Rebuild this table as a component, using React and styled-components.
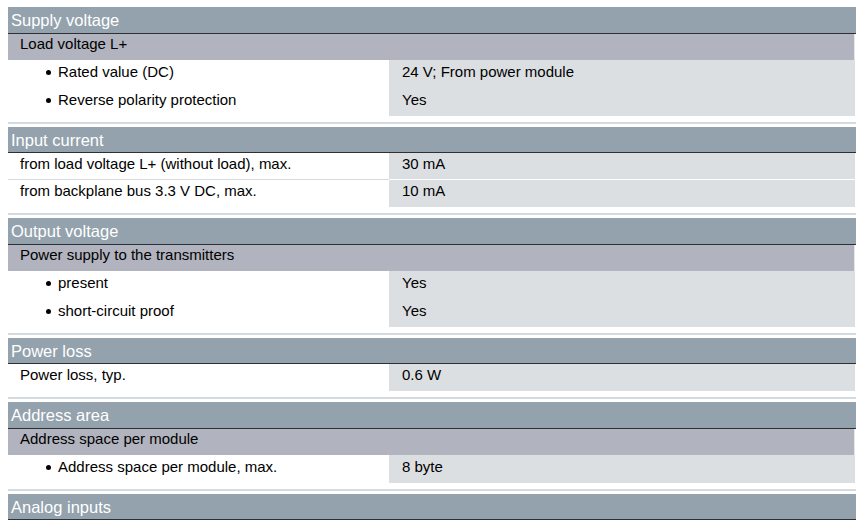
import React from 'react';
import styled, { createGlobalStyle } from 'styled-components';

const GlobalStyle = createGlobalStyle`
  body {
    margin: 0;
    background: #fff;
    font-family: "Liberation Sans", Arial, sans-serif;
    color: #000;
  }
`;

const Page = styled.div`
  padding: 7px 10px 0 8px;
`;

const Table = styled.div`
  width: 848px;
  display: flex;
  flex-direction: column;
`;

const Section = styled.section`
  display: flex;
  flex-direction: column;
  margin-top: ${({ first }) => (first ? '0' : '6px')};
  padding-top: ${({ first }) => (first ? '0' : '3px')};
  border-top: ${({ first }) => (first ? 'none' : '2px solid #d5dadf')};
`;

const Header = styled.div`
  height: 25.5px;
  line-height: 27px;
  padding-left: 3px;
  background: #93a2ad;
  border-bottom: 1px solid #2e3134;
  color: #fff;
  font-size: 16.5px;
  overflow: hidden;
`;

const SubHeader = styled.div`
  height: 26px;
  box-sizing: border-box;
  line-height: 20px;
  padding-left: 12px;
  width: 847px;
  background: #b1b4be;
  border-right: 1px solid #e4e6e9;
  font-size: 15px;
`;

const Row = styled.div`
  display: grid;
  grid-template-columns: 381px 466px;
  height: ${({ bullet }) => (bullet ? '28px' : '27px')};
  font-size: 15px;
  line-height: 17px;
`;

const Label = styled.div`
  box-sizing: border-box;
  padding: ${({ bullet }) => (bullet ? '3px 0 0 38px' : '2px 0 0 12px')};
  border-bottom: ${({ sep }) => (sep ? '1px solid #d7dbdf' : 'none')};
  display: flex;
  align-items: flex-start;
`;

const Dot = styled.span`
  width: 5px;
  height: 5px;
  border-radius: 50%;
  background: #000;
  margin: 7px 7px 0 0;
  flex: none;
`;

const Value = styled.div`
  box-sizing: border-box;
  padding: ${({ bullet }) => (bullet ? '3px 0 0 13px' : '2px 0 0 13px')};
  background: #dcdfe2;
  border-bottom: ${({ sep }) => (sep ? '1px solid #fff' : 'none')};
`;

const sections = [
  {
    title: 'Supply voltage',
    sub: 'Load voltage L+',
    rows: [
      { label: 'Rated value (DC)', value: '24 V; From power module', bullet: true },
      { label: 'Reverse polarity protection', value: 'Yes', bullet: true },
    ],
  },
  {
    title: 'Input current',
    rows: [
      { label: 'from load voltage L+ (without load), max.', value: '30 mA', sep: true },
      { label: 'from backplane bus 3.3 V DC, max.', value: '10 mA' },
    ],
  },
  {
    title: 'Output voltage',
    sub: 'Power supply to the transmitters',
    rows: [
      { label: 'present', value: 'Yes', bullet: true },
      { label: 'short-circuit proof', value: 'Yes', bullet: true },
    ],
  },
  {
    title: 'Power loss',
    rows: [{ label: 'Power loss, typ.', value: '0.6 W' }],
  },
  {
    title: 'Address area',
    sub: 'Address space per module',
    rows: [{ label: 'Address space per module, max.', value: '8 byte', bullet: true }],
  },
  {
    title: 'Analog inputs',
    rows: [],
  },
];

const App = () => (
  <>
    <GlobalStyle />
    <Page>
      <Table>
        {sections.map((s, i) => (
          <Section key={s.title} first={i === 0}>
            <Header>{s.title}</Header>
            {s.sub && <SubHeader>{s.sub}</SubHeader>}
            {s.rows.map((r) => (
              <Row key={r.label} bullet={r.bullet}>
                <Label bullet={r.bullet} sep={r.sep}>
                  {r.bullet && <Dot />}
                  {r.label}
                </Label>
                <Value bullet={r.bullet} sep={r.sep}>{r.value}</Value>
              </Row>
            ))}
          </Section>
        ))}
      </Table>
    </Page>
  </>
);

export default App;
